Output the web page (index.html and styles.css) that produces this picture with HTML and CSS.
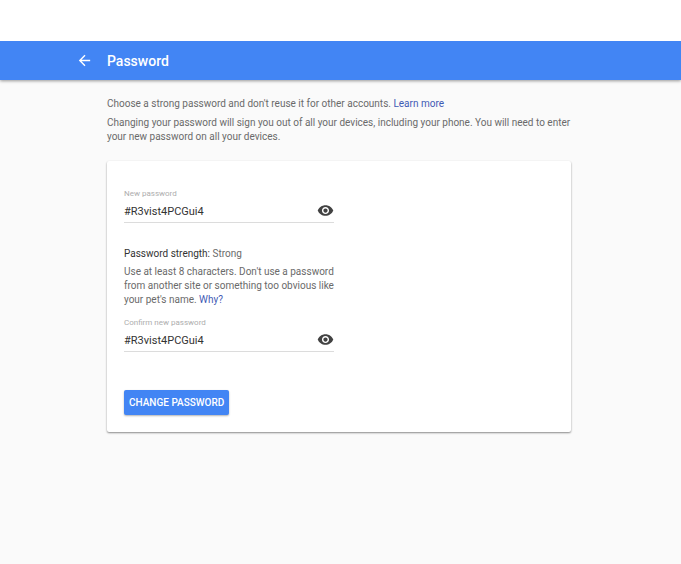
FILE: index.html
```
<!DOCTYPE html>
<html lang="en">
<head>
    <meta charset="UTF-8">
    <meta name="viewport" content="width=device-width, initial-scale=1.0">
    <title>Password</title>
    <link rel="stylesheet" href="styles.css">
</head>
<body>
    <header class="top-bar">
        <a href="#" class="back" aria-label="Back">
            <svg width="17" height="17" viewBox="0 0 24 24" fill="#fff"><path d="M20 11H7.83l5.59-5.59L12 4l-8 8 8 8 1.41-1.41L7.83 13H20v-2z"/></svg>
        </a>
        <h1>Password</h1>
    </header>

    <main class="content">
        <div class="intro">
            <p>Choose a strong password and don't reuse it for other accounts. <a href="#">Learn more</a></p>
            <p>Changing your password will sign you out of all your devices, including your phone. You will need to enter your new password on all your devices.</p>
        </div>

        <form class="card">
            <div class="field">
                <label for="new-password">New password</label>
                <div class="input-row">
                    <input type="text" id="new-password" value="#R3vist4PCGui4" autocomplete="off">
                    <button type="button" class="toggle" aria-label="Show new password">
                        <svg width="17" height="17" viewBox="0 0 24 24" fill="#424242"><path d="M12 4.5C7 4.5 2.73 7.61 1 12c1.73 4.39 6 7.5 11 7.5s9.27-3.11 11-7.5c-1.73-4.39-6-7.5-11-7.5zM12 17c-2.76 0-5-2.24-5-5s2.24-5 5-5 5 2.24 5 5-2.24 5-5 5zm0-8c-1.66 0-3 1.34-3 3s1.34 3 3 3 3-1.34 3-3-1.34-3-3-3z"/></svg>
                    </button>
                </div>
            </div>

            <div class="hint">
                <p><span class="strength">Password strength:</span> Strong</p>
                <p>Use at least 8 characters. Don't use a password from another site or something too obvious like your pet's name. <a href="#">Why?</a></p>
            </div>

            <div class="field">
                <label for="confirm-password">Confirm new password</label>
                <div class="input-row">
                    <input type="text" id="confirm-password" value="#R3vist4PCGui4" autocomplete="off">
                    <button type="button" class="toggle" aria-label="Show confirmed password">
                        <svg width="17" height="17" viewBox="0 0 24 24" fill="#424242"><path d="M12 4.5C7 4.5 2.73 7.61 1 12c1.73 4.39 6 7.5 11 7.5s9.27-3.11 11-7.5c-1.73-4.39-6-7.5-11-7.5zM12 17c-2.76 0-5-2.24-5-5s2.24-5 5-5 5 2.24 5 5-2.24 5-5 5zm0-8c-1.66 0-3 1.34-3 3s1.34 3 3 3 3-1.34 3-3-1.34-3-3-3z"/></svg>
                    </button>
                </div>
            </div>

            <button type="submit" class="submit-btn">CHANGE PASSWORD</button>
        </form>
    </main>
</body>
</html>
```
FILE: styles.css
```
* {
    box-sizing: border-box;
}
body {
    font-family: Roboto, sans-serif;
    font-size: 10px;
    line-height: 14px;
    margin: 0;
    background-color: #fafafa;
    color: #6a6a6a;
}
p {
    margin: 0;
}
a {
    color: #3f5bb5;
    text-decoration: none;
}
.top-bar {
    display: flex;
    align-items: center;
    gap: 14px;
    height: 80px;
    padding-left: 76px;
    border-top: 41px solid #fff;
    background-color: #4285f4;
    box-shadow: 0 1px 3px rgba(0, 0, 0, 0.4);
}
.top-bar h1 {
    margin: 0;
    font-size: 14px;
    font-weight: 500;
    color: #fff;
}
.back {
    display: flex;
}
.content {
    padding: 17px 110px 32px 107px;
}
.intro {
    display: flex;
    flex-direction: column;
    gap: 5px;
}
.card {
    margin-top: 17px;
    padding: 26px 17px 17px;
    background-color: #fff;
    border-radius: 2px;
    box-shadow: 0 1px 2px rgba(0, 0, 0, 0.45);
}
.field,
.hint {
    max-width: 210px;
}
.field label {
    display: block;
    font-size: 8px;
    color: #adadad;
}
.input-row {
    display: flex;
    align-items: center;
    height: 22px;
    border-bottom: 1px solid #dcdcdc;
}
.input-row input {
    flex: 1;
    min-width: 0;
    padding: 0;
    border: none;
    outline: none;
    background: none;
    font-family: inherit;
    font-size: 11px;
    color: #333;
}
.toggle {
    display: flex;
    padding: 0 0 2px;
    border: none;
    background: none;
    cursor: pointer;
}
.hint {
    display: flex;
    flex-direction: column;
    gap: 4px;
    margin: 24px 0 9px;
}
.strength {
    color: #333;
}
.submit-btn {
    display: block;
    height: 25px;
    margin-top: 38px;
    padding: 0 5px;
    border: none;
    border-radius: 2px;
    background-color: #4285f4;
    box-shadow: 0 1px 2px rgba(0, 0, 0, 0.3);
    font-family: inherit;
    font-size: 10px;
    font-weight: 500;
    color: #fff;
    cursor: pointer;
}
```
